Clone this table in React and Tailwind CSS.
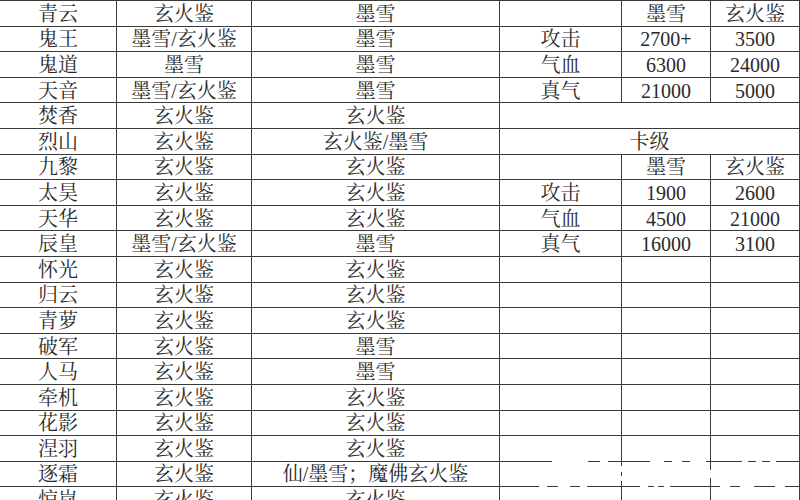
import React from "react";

const rows = [
  ["青云", "玄火鉴", "墨雪", ["", "墨雪", "玄火鉴"]],
  ["鬼王", "墨雪/玄火鉴", "墨雪", ["攻击", "2700+", "3500"]],
  ["鬼道", "墨雪", "墨雪", ["气血", "6300", "24000"]],
  ["天音", "墨雪/玄火鉴", "墨雪", ["真气", "21000", "5000"]],
  ["焚香", "玄火鉴", "玄火鉴", ""],
  ["烈山", "玄火鉴", "玄火鉴/墨雪", "卡级"],
  ["九黎", "玄火鉴", "玄火鉴", ["", "墨雪", "玄火鉴"]],
  ["太昊", "玄火鉴", "玄火鉴", ["攻击", "1900", "2600"]],
  ["天华", "玄火鉴", "玄火鉴", ["气血", "4500", "21000"]],
  ["辰皇", "墨雪/玄火鉴", "墨雪", ["真气", "16000", "3100"]],
  ["怀光", "玄火鉴", "玄火鉴", ["", "", ""]],
  ["归云", "玄火鉴", "玄火鉴", ["", "", ""]],
  ["青萝", "玄火鉴", "玄火鉴", ["", "", ""]],
  ["破军", "玄火鉴", "墨雪", ["", "", ""]],
  ["人马", "玄火鉴", "墨雪", ["", "", ""]],
  ["牵机", "玄火鉴", "玄火鉴", ["", "", ""]],
  ["花影", "玄火鉴", "玄火鉴", ["", "", ""]],
  ["涅羽", "玄火鉴", "玄火鉴", ["", "", ""]],
  ["逐霜", "玄火鉴", "仙/墨雪；魔佛玄火鉴", ["", "", ""]],
  ["惊岚", "玄火鉴", "玄火鉴", ["", "", ""]],
];

function Cell({ className = "", children }) {
  return (
    <div
      className={`flex items-center justify-center shrink-0 border-r border-[#3a3a3a] whitespace-nowrap ${className}`}
    >
      {children}
    </div>
  );
}

// white marks left by the watermark over the grid lines
const marks = [
  "left-[552px] top-[460px] w-[36px] h-[5px]",
  "left-[600px] top-[460px] w-[8px] h-[5px]",
  "left-[650px] top-[460px] w-[14px] h-[5px]",
  "left-[672px] top-[460px] w-[10px] h-[5px]",
  "left-[690px] top-[460px] w-[16px] h-[5px]",
  "left-[742px] top-[460px] w-[6px] h-[5px]",
  "left-[756px] top-[460px] w-[6px] h-[5px]",
  "left-[770px] top-[460px] w-[6px] h-[5px]",
  "left-[539px] top-[486px] w-[8px] h-[5px]",
  "left-[558px] top-[486px] w-[12px] h-[5px]",
  "left-[580px] top-[486px] w-[7px] h-[5px]",
  "left-[640px] top-[486px] w-[8px] h-[5px]",
  "left-[654px] top-[486px] w-[4px] h-[5px]",
  "left-[664px] top-[486px] w-[6px] h-[5px]",
  "left-[720px] top-[486px] w-[10px] h-[5px]",
  "left-[740px] top-[486px] w-[14px] h-[5px]",
  "left-[775px] top-[486px] w-[10px] h-[5px]",
  "left-[620px] top-[466px] w-[4px] h-[6px]",
  "left-[620px] top-[476px] w-[4px] h-[5px]",
  "left-[709px] top-[470px] w-[4px] h-[8px]",
];

export default function App() {
  return (
    <main
      className="relative w-[800px] h-[500px] overflow-hidden bg-white text-[#2a2a2a] text-[20px] leading-none"
      style={{ fontFamily: '"Liberation Serif", "Noto Serif CJK SC", "Noto Sans CJK SC", serif' }}
    >
      <div className="border-t border-[#3a3a3a]">
        {rows.map(([name, b, c, right], i) => (
          <div key={i} className="flex h-[25.6px] border-b border-[#3a3a3a] box-border">
            <Cell className="w-[117px] pt-px">{name}</Cell>
            <Cell className="w-[135px] pt-px">{b}</Cell>
            <Cell className="w-[248px] pt-px">{c}</Cell>
            {Array.isArray(right) ? (
              <>
                <Cell className="w-[122px] pt-px">{right[0]}</Cell>
                <Cell className="w-[89px] pt-px">{right[1]}</Cell>
                <Cell className="w-[89px] pt-px">{right[2]}</Cell>
              </>
            ) : (
              <Cell className="w-[300px] pt-px">{right}</Cell>
            )}
          </div>
        ))}
      </div>
      {marks.map((m) => (
        <div key={m} className={`absolute bg-white ${m}`} />
      ))}
    </main>
  );
}
